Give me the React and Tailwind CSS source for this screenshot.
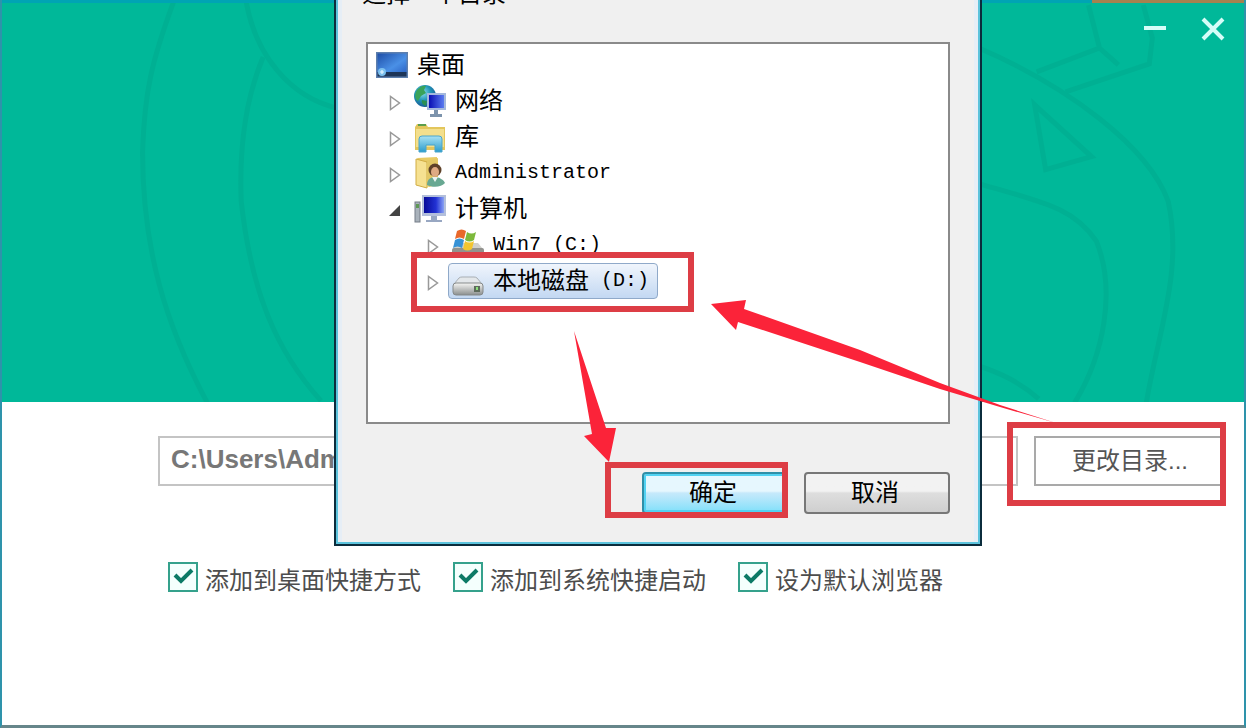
import { useState } from "react";

const options = [
  { id: "desktop", label: "添加到桌面快捷方式" },
  { id: "quick", label: "添加到系统快捷启动" },
  { id: "default", label: "设为默认浏览器" },
];

const tree = [
  { id: "desktop", name: "桌面", level: 0, icon: DesktopIcon },
  { id: "network", name: "网络", level: 1, icon: NetworkIcon },
  { id: "library", name: "库", level: 1, icon: LibraryIcon },
  { id: "admin", latin: "Administrator", level: 1, icon: UserIcon },
  { id: "computer", name: "计算机", level: 1, icon: ComputerIcon, open: true },
  { id: "c", latin: "Win7 (C:)", level: 2, icon: WinDriveIcon },
  { id: "d", name: "本地磁盘", latin: " (D:)", level: 2, icon: DriveIcon },
];

const indents = ["pl-1", "pl-[21px]", "pl-[59px]"];

function DesktopIcon() {
  return (
    <svg viewBox="0 0 32 32" className="h-8 w-8 shrink-0">
      <defs>
        <linearGradient id="desk" x1="0" y1="0" x2="1" y2="1">
          <stop offset="0" stopColor="#1f4fa8" />
          <stop offset="0.6" stopColor="#4a90e6" />
          <stop offset="1" stopColor="#2a62c4" />
        </linearGradient>
      </defs>
      <rect x="0" y="3" width="32" height="26" fill="#5d7fae" />
      <rect x="1.5" y="4.5" width="29" height="20" fill="url(#desk)" />
      <rect x="1.5" y="23" width="29" height="4.5" fill="#1d3558" />
      <circle cx="6" cy="23" r="4" fill="#7cc0ee" />
      <path d="M4 23h4M6 21v4" stroke="#e6f6ff" strokeWidth="1.2" />
    </svg>
  );
}

function NetworkIcon() {
  return (
    <svg viewBox="0 0 32 32" className="h-8 w-8 shrink-0">
      <defs>
        <radialGradient id="globe" cx="0.4" cy="0.35" r="0.7">
          <stop offset="0" stopColor="#8fe0ef" />
          <stop offset="0.5" stopColor="#2196b8" />
          <stop offset="1" stopColor="#15508f" />
        </radialGradient>
        <linearGradient id="screen" x1="0" y1="0" x2="1" y2="0">
          <stop offset="0" stopColor="#0a0fb4" />
          <stop offset="1" stopColor="#5a7bf0" />
        </linearGradient>
      </defs>
      <circle cx="11" cy="11" r="11" fill="url(#globe)" />
      <path d="M3 5c3-4 7-5 9-4l-2 4 2 3-5 3-3 5c-3-2-4-6-1-11z" fill="#3aa35a" />
      <path d="M8 15l5 1-1 5c-3-1-5-3-4-6z" fill="#2c8f52" />
      <rect x="13" y="8" width="19" height="17" fill="#a4b8dc" />
      <rect x="15" y="10" width="15" height="13" fill="url(#screen)" />
      <path d="M20 25h4v4h4v3H16v-3h4z" fill="#7c93ac" />
    </svg>
  );
}

function LibraryIcon() {
  return (
    <svg viewBox="0 0 32 32" className="h-8 w-8 shrink-0">
      <defs>
        <linearGradient id="tray" x1="0" y1="0" x2="0" y2="1">
          <stop offset="0" stopColor="#a9e2f4" />
          <stop offset="1" stopColor="#2a9ccc" />
        </linearGradient>
      </defs>
      <path d="M1 6l2-3h9l2 3h17v23H1z" fill="#e3c65c" />
      <path d="M2 8h28v18H2z" fill="#f3df8d" />
      <path d="M4 4h8" stroke="#5c9e4c" strokeWidth="2" />
      <path d="M5 18q0-3 3-3h17q3 0 3 3v13h-7v-7h-9v7H5z" fill="url(#tray)" stroke="#4aa5cb" />
    </svg>
  );
}

function UserIcon() {
  return (
    <svg viewBox="0 0 32 32" className="h-8 w-8 shrink-0">
      <path d="M3 1l20-1v28l-8 2z" fill="#e8cb64" />
      <path d="M2 2l11 3v26L2 28z" fill="#f6e191" stroke="#d1ad45" />
      <path d="M13 4l11-3v26l-11 3z" fill="#e3c866" />
      <circle cx="21" cy="13" r="6.5" fill="#5e4028" />
      <ellipse cx="21" cy="15" rx="4" ry="5" fill="#dfaa83" />
      <path d="M13 28c0-6 4-8 8-8s9 3 10 6c-3 4-12 5-18 2z" fill="#68a892" />
      <path d="M18 20l3 5 3-5z" fill="#e9f3ef" />
    </svg>
  );
}

function ComputerIcon() {
  return (
    <svg viewBox="0 0 32 32" className="h-8 w-8 shrink-0">
      <defs>
        <linearGradient id="monitor" x1="0" y1="0" x2="1" y2="0">
          <stop offset="0" stopColor="#070a98" />
          <stop offset="0.6" stopColor="#2232d4" />
          <stop offset="1" stopColor="#8aa2f4" />
        </linearGradient>
      </defs>
      <rect x="1" y="9" width="5" height="20" fill="#a9b2bb" stroke="#747d87" />
      <rect x="2" y="11" width="3" height="4" fill="#5f9955" />
      <rect x="8" y="2" width="24" height="21" fill="#b3bfdb" />
      <rect x="10" y="4" width="20" height="16" fill="url(#monitor)" />
      <path d="M17 23h6v4h5v2H12v-2h5z" fill="#98a7c2" />
    </svg>
  );
}

function WinDriveIcon() {
  return (
    <svg viewBox="0 0 32 32" className="h-8 w-8 shrink-0">
      <path d="M1 20l5-6h20l5 6z" fill="#d0d0cc" />
      <rect x="0" y="19" width="32" height="10" rx="2" fill="#92928e" />
      <path d="M5 2c3-2 6-2 9 0l-2 8c-3-2-6-2-9 0z" fill="#e9682b" />
      <path d="M15 3c3 2 6 2 9 0l-2 8c-3 2-6 2-9 0z" fill="#7db93b" />
      <path d="M3 11c3-2 6-2 9 0l-2 8c-3-2-6-2-9 0z" fill="#3792d6" />
      <path d="M13 12c3 2 6 2 9 0l-2 8c-3 2-6 2-9 0z" fill="#f3c52f" />
    </svg>
  );
}

function DriveIcon() {
  return (
    <svg viewBox="0 0 32 32" className="h-8 w-8 shrink-0">
      <defs>
        <linearGradient id="drive" x1="0" y1="0" x2="0" y2="1">
          <stop offset="0" stopColor="#f6f6f4" />
          <stop offset="1" stopColor="#8b8f8e" />
        </linearGradient>
      </defs>
      <path d="M2 19l5-6q1-1 3-1h12q2 0 3 1l5 6z" fill="#e3e7ea" stroke="#a9afb4" />
      <rect x="1" y="18" width="30" height="12" rx="3" fill="url(#drive)" stroke="#85898a" />
      <rect x="22" y="21" width="6" height="6" fill="#5d6b5b" />
      <rect x="24" y="22" width="2" height="3" fill="#8ee07b" />
    </svg>
  );
}

function Arrow({ open }) {
  return (
    <svg viewBox="0 0 12 16" className="mt-1 h-4 w-3 shrink-0">
      {open ? (
        <path d="M11 2v11H0z" fill="#444" />
      ) : (
        <path d="M1.5 1.5v13L10.5 8z" fill="#fff" stroke="#999" strokeWidth="1.5" />
      )}
    </svg>
  );
}

function TreeRow({ item, selected, onSelect }) {
  const Icon = item.icon;

  return (
    <li className={`flex h-9 items-center ${indents[item.level]}`}>
      {item.level > 0 && <Arrow open={item.open} />}
      <button
        onClick={() => onSelect(item.id)}
        className={`flex h-9 items-center gap-[9px] rounded border pl-[3px] pr-2 ${
          item.level > 0 ? "ml-[9px]" : ""
        } ${
          selected
            ? "border-[#8fa9c9] bg-linear-to-b from-[#f0f5fc] to-[#c3d8f2]"
            : "border-transparent"
        }`}
      >
        <Icon />
        <span className="flex items-center whitespace-pre text-2xl leading-8">
          {item.name}
          {item.latin && (
            <span className="font-['Liberation_Mono',monospace] text-xl leading-8">
              {item.latin}
            </span>
          )}
        </span>
      </button>
    </li>
  );
}

function HeaderPattern() {
  return (
    <svg
      viewBox="0 0 1246 402"
      preserveAspectRatio="xMidYMid slice"
      className="absolute inset-0 h-full w-full"
      fill="none"
      stroke="#00b093"
      strokeWidth="5"
    >
      <path d="M172 0C150 60 143 90 141 150C141 250 165 325 206 402" />
      <path d="M245 0C255 55 290 95 335 106" />
      <path d="M262 55C243 100 238 150 240 200C250 290 275 350 320 400" />
      <path d="M980 46C1070 85 1150 145 1170 200C1185 270 1160 330 1148 402" />
      <path d="M1038 70L1101 46L1090 3M1101 46L1120 63M1067 90L1151 62L1154 36L1145 3" />
      <path d="M1036 103L1093 155L1047 168Z" />
      <path d="M980 182C1040 200 1075 205 1098 240C1118 290 1105 355 1076 402" />
      <path d="M980 365C1000 372 1020 380 1040 398" />
    </svg>
  );
}

function FolderDialog() {
  const [selected, setSelected] = useState("d");

  return (
    <div
      role="dialog"
      aria-label="选择一个目录"
      className="absolute -top-5 left-[332px] w-[648px] border-2 border-[#0b2c3c] bg-[#5cc3dc] px-[2px] pb-[2px] text-black"
    >
      <div className="border-x-4 border-[#e6eef6] bg-[#f0f0f0] px-6 pb-7">
        <h2 className="-ml-1 h-[60px] text-2xl leading-6">选择一个目录</h2>
        <div className="relative">
          <ul className="h-[382px] border-2 border-[#8a8a8a] bg-white py-[3px]">
            {tree.map((item) => (
              <TreeRow
                key={item.id}
                item={item}
                selected={selected === item.id}
                onSelect={setSelected}
              />
            ))}
          </ul>
          <div className="pointer-events-none absolute left-[45px] top-[210px] h-[60px] w-[283px] border-6 border-[#dd3d45]" />
        </div>
        <div className="mt-12 flex justify-end gap-4">
          <div className="relative">
            <button className="h-[42px] w-[146px] rounded border-2 border-[#2f8fa8] bg-linear-to-b from-[#e6f7fe] from-45% via-[#c6e9fb] via-50% to-[#7fe0fa] pr-1 text-2xl leading-8 shadow-[inset_0_0_0_2px_#52d2f2]">
              确定
            </button>
            <div className="pointer-events-none absolute -bottom-1 -left-[37px] right-0 -top-[10px] border-6 border-[#dd3d45]" />
          </div>
          <button className="h-[42px] w-[146px] rounded border-2 border-[#777] bg-linear-to-b from-[#f2f2f2] from-45% via-[#dedede] via-50% to-[#cfcfcf] pr-1 text-2xl leading-8">
            取消
          </button>
        </div>
      </div>
    </div>
  );
}

// red pointers drawn over the dialog
function Pointers() {
  return (
    <svg
      viewBox="2 0 1246 728"
      className="pointer-events-none absolute left-0 top-0 h-[728px] w-[1246px]"
      fill="#fb2339"
    >
      <path d="M574 331L606 428L616 428L609 462L584 436L592 434Z" />
      <path d="M711 304L746 300L744 309L860 350L940 383L1000 405L1056 423L1000 407L940 389L860 362L738 322L736 330Z" />
    </svg>
  );
}

function App() {
  const [checked, setChecked] = useState({
    desktop: true,
    quick: true,
    default: true,
  });

  return (
    <div className="relative flex min-h-screen flex-col overflow-hidden border-2 border-t-0 border-b-3 border-[#2e93ab] border-b-[#66868a] bg-white font-['Liberation_Sans','Noto_Sans_CJK_SC',sans-serif]">
      <header className="relative flex h-[402px] shrink-0 justify-end border-t-3 border-[#00a4b4] bg-[#00b899]">
        <HeaderPattern />
        <div className="absolute -top-[3px] right-0 h-[3px] w-[152px] bg-[#a5824f]" />
        <div className="relative mr-[17px] mt-3 flex gap-[30px]">
          <button aria-label="最小化" className="h-7 w-7">
            <svg viewBox="0 0 28 28" className="h-7 w-7" stroke="#d5fdf8" strokeWidth="4">
              <path d="M3 13h22" />
            </svg>
          </button>
          <button aria-label="关闭" className="h-7 w-7">
            <svg viewBox="0 0 28 28" className="h-7 w-7" stroke="#d5fdf8" strokeWidth="4">
              <path d="M4 4l20 20M24 4L4 24" />
            </svg>
          </button>
        </div>
      </header>

      <main className="flex-1">
        <div className="flex gap-4 pl-[156px] pr-[22px] pt-[34px]">
          <input
            aria-label="安装目录"
            defaultValue="C:\Users\Administrator"
            className="h-[50px] min-w-0 flex-1 border-2 border-[#c4c4c4] px-[11px] pb-1 text-[26px] font-bold text-[#777] outline-none"
          />
          <div className="relative">
            <button className="h-[50px] w-[188px] border-2 border-[#a9a9a9] bg-white pl-1 text-2xl leading-8 text-[#555]">
              更改目录...
            </button>
            <div className="pointer-events-none absolute -bottom-5 -left-[27px] -right-1 -top-[14px] z-10 border-6 border-[#dd3d45]" />
          </div>
        </div>

        <div className="mt-[76px] flex gap-8 pl-[166px]">
          {options.map((option) => (
            <label key={option.id} className="flex items-start gap-[7px]">
              <span className="relative">
                <input
                  type="checkbox"
                  checked={checked[option.id]}
                  onChange={(e) =>
                    setChecked({ ...checked, [option.id]: e.target.checked })
                  }
                  className="block h-[30px] w-[30px] appearance-none border-2 border-[#35a18c] bg-[#f4fffd]"
                />
                {checked[option.id] && (
                  <svg
                    viewBox="0 0 30 30"
                    className="pointer-events-none absolute inset-0"
                    fill="none"
                    stroke="#0c7a66"
                    strokeWidth="4"
                  >
                    <path d="M7 13l6 6L24 8" />
                  </svg>
                )}
              </span>
              <span className="pt-[3px] text-2xl leading-8 text-[#4d4d4d]">
                {option.label}
              </span>
            </label>
          ))}
        </div>
      </main>

      <FolderDialog />
      <Pointers />
    </div>
  );
}

export default App;
